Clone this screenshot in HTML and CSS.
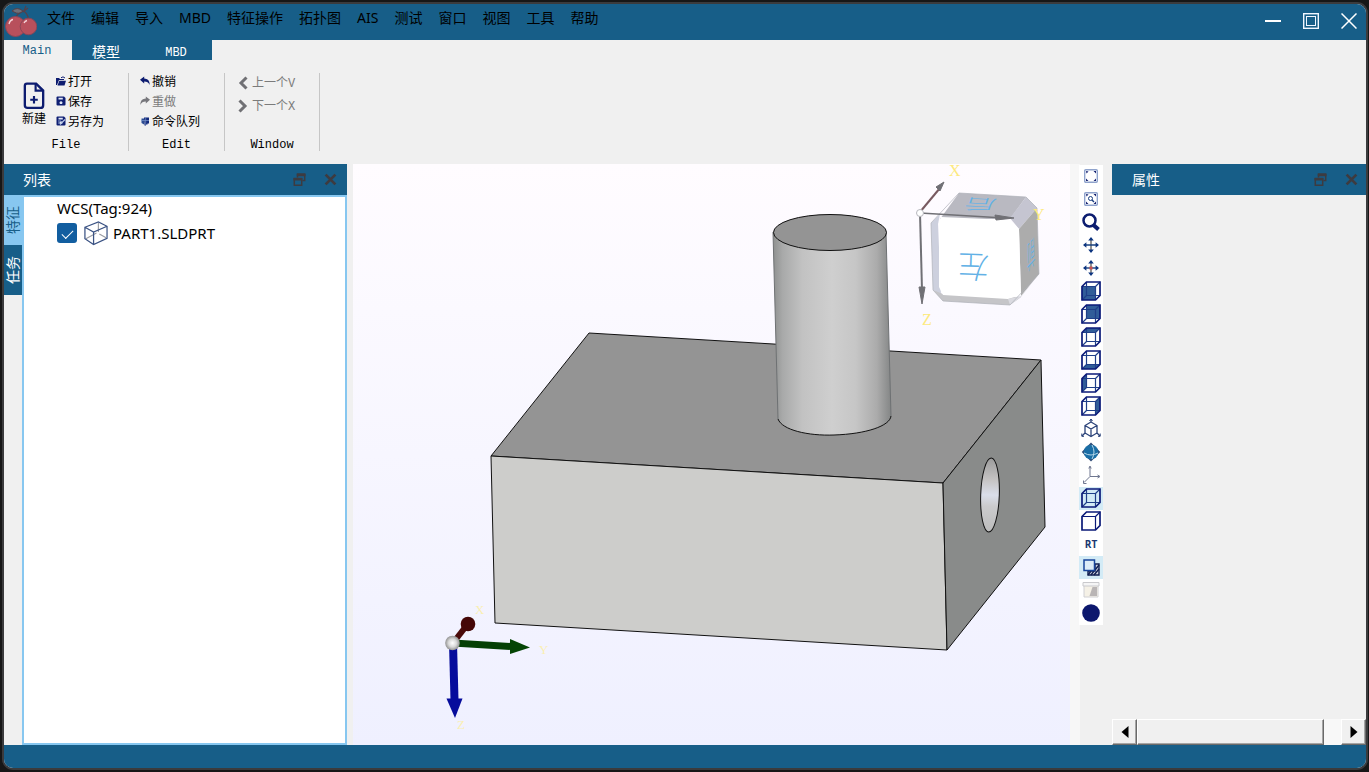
FILE: index.html
```html
<!DOCTYPE html>
<html lang="zh-CN">
<head>
<meta charset="utf-8">
<title>PART1.SLDPRT</title>
<link rel="stylesheet" href="styles.css">
</head>
<body>
<svg class="defs" aria-hidden="true">
  <defs>
    <symbol id="cube" viewBox="0 0 20 20">
      <path d="M1 5.500H14.500V19M5.500 1V14.500H19M14.500 5.500L19 1M1 19L5.500 14.500" fill="none" stroke="#1f3f88" stroke-width="1.200"/>
      <path d="M1 5.500L5.500 1H19V14.500L14.500 19H1Z" fill="none" stroke="#0b1a78" stroke-width="1.700"/>
    </symbol>
    <symbol id="move" viewBox="0 0 16 16">
      <path d="M8 2V14" stroke="#777" stroke-width="1.6"/>
      <path d="M2 8H14" stroke="#17407f" stroke-width="1.4"/>
      <path d="M8 0L10.8 3.4H5.2ZM8 16L5.2 12.6H10.8ZM0 8L3.4 5.2V10.8ZM16 8L12.6 10.8V5.2Z" fill="#0d3580"/>
    </symbol>
    <symbol id="frame" viewBox="0 0 14 14">
      <rect x=".7" y=".7" width="12.600" height="12.600" rx="1" fill="#fff" stroke="#8fa3cc" stroke-width="1.4"/>
      <path d="M2 2L4.5 2.5L2.5 4.5ZM12 2V4.5L9.5 2ZM2 12V9.5L4.5 12ZM12 12H9.5L12 9.5Z" fill="#142070"/>
    </symbol>
    <symbol id="restore" viewBox="0 0 12 13">
      <path d="M4 4.5V1H11.2V7.5H9" fill="none" stroke="#3d3b40" stroke-width="1.5"/>
      <path d="M3.300 1H12V3.200H3.300ZM0 5H8.800V7.400H0Z" fill="#3d3b40"/>
      <path d="M.8 5.500H8.200V12.200H.8Z" fill="none" stroke="#3d3b40" stroke-width="1.5"/>
    </symbol>
    <symbol id="cross" viewBox="0 0 12 12">
      <path d="M1.500 1.500L10.500 10.500M10.500 1.500L1.500 10.500" stroke="#3d3b40" stroke-width="2.600"/>
    </symbol>
    <symbol id="floppy" viewBox="0 0 10 10">
      <path d="M.5 1.500Q.5.5 1.500.5H8L9.500 2V8.500Q9.500 9.500 8.500 9.500H1.500Q.5 9.500.5 8.500Z" fill="#0f1f73"/>
      <path d="M2.500 1.800H6.800V3.600H2.500ZM5 5.300A1.500 1.400 0 1 0 5.010 5.300" fill="#dfe6f5"/>
    </symbol>
  </defs>
</svg>
<div class="window">
  <header class="titlebar">
    <svg class="logo" viewBox="0 0 32 33" aria-hidden="true">
      <path d="M21 1L19 6Q12 8 9 15M19 6Q24 10 24 19M18 7L23 3" fill="none" stroke="#554049" stroke-width="1.200"/>
      <path d="M7 6Q12 1 18 6Q14 10 9 7Z" fill="#6d7079" stroke="#554049"/>
      <circle cx="10.500" cy="21.500" r="10" fill="#b8505c" stroke="#8b4757"/>
      <circle cx="23.500" cy="21.500" r="8.300" fill="#b8505c" stroke="#8b4757"/>
      <path d="M4 19Q5 15 8 14.500M19 18Q20 16 22 15.500" fill="none" stroke="#f4d4d8" stroke-width="1.300"/>
    </svg>
    <nav class="menu">
      <button>文件</button><button>编辑</button><button>导入</button><button>MBD</button><button>特征操作</button><button>拓扑图</button><button>AIS</button><button>测试</button><button>窗口</button><button>视图</button><button>工具</button><button>帮助</button>
    </nav>
    <div class="controls">
      <button aria-label="最小化"><svg viewBox="0 0 16 16"><path d="M0 8H16" stroke="#fff" stroke-width="2"/></svg></button>
      <button aria-label="最大化"><svg viewBox="0 0 16 16" fill="none" stroke="#f0f6ff"><rect x=".7" y=".7" width="14.600" height="14.600" stroke-width="1.400"/><rect x="3.500" y="3.500" width="9" height="9"/></svg></button>
      <button aria-label="关闭"><svg viewBox="0 0 16 16"><path d="M.5.5L15.500 15.500M15.500.5L.5 15.500" stroke="#fff" stroke-width="1.500"/></svg></button>
    </div>
  </header>

  <div class="tabs" role="tablist">
    <button class="tab tab-active" role="tab" aria-selected="true">Main</button>
    <button class="tab tab-cn" role="tab">模型</button>
    <button class="tab" role="tab">MBD</button>
  </div>

  <section class="ribbon">
    <div class="group group-file">
      <div class="group-body">
        <button class="big">
          <svg viewBox="0 0 20 26"><path d="M3.500 1.500H12L18.500 8V21.500Q18.500 24 16 24H4Q1.500 24 1.500 21.500V3.500Q1.500 1.500 3.500 1.500Z" fill="none" stroke="#0d1c70" stroke-width="2.200"/><path d="M11.500 1.500V8H18.500M10 13V20M6.500 16.500H13.500" fill="none" stroke="#0d1c70" stroke-width="2"/></svg>
          新建
        </button>
        <div class="stack">
          <button><svg viewBox="0 0 10 10"><path d="M0 9V2H3L4 3H8V4H3L1 9ZM3.300 4.800H10L8.500 9.500H1.500Z" fill="#0d1c70"/><path d="M5 1.800Q7-.2 9 2" fill="none" stroke="#0d1c70"/></svg>打开</button>
          <button><svg><use href="#floppy"/></svg>保存</button>
          <button><svg viewBox="0 0 10 10"><use href="#floppy" width="10" height="10"/><path d="M4 8.500L9 3.500" stroke="#b8c6e4" stroke-width="1.200"/><path d="M2 5H5M2 7H4" stroke="#8fa5d2"/></svg>另存为</button>
        </div>
      </div>
      <div class="group-name">File</div>
    </div>
    <div class="group group-edit">
      <div class="stack">
        <button><svg viewBox="0 0 10 10"><path d="M0 3.800L4.200.5V2.600Q9.500 2.600 9.800 9Q8 5.500 4.200 5.600V7.500Z" fill="#0d1c70"/></svg>撤销</button>
        <button disabled><svg viewBox="0 0 10 10"><path d="M10 3.800L5.800.5V2.600Q.5 2.600.2 9Q2 5.500 5.800 5.600V7.500Z" fill="#77777c"/></svg>重做</button>
        <button><svg viewBox="0 0 10 10"><path d="M1.500 2.500H4V8.500L1.500 7Z" fill="#2c4c93"/><path d="M4 1.500H9V7.500H7.500V8.500H6V9.500H4.500Z" fill="#12297b"/><path d="M1 4.500H9M5.700 1V9" stroke="#7d97cc" stroke-width=".7"/></svg>命令队列</button>
      </div>
      <div class="group-name">Edit</div>
    </div>
    <div class="group group-window">
      <div class="stack stack-wide">
        <button disabled><svg viewBox="0 0 10 14"><path d="M8.500 1.500L3 7L8.500 12.500" fill="none" stroke="#707074" stroke-width="3"/></svg>上一个V</button>
        <button disabled><svg viewBox="0 0 10 14"><path d="M1.500 1.500L7 7L1.500 12.500" fill="none" stroke="#707074" stroke-width="3"/></svg>下一个X</button>
      </div>
      <div class="group-name">Window</div>
    </div>
  </section>

  <main class="workspace">
    <aside class="dock dock-left">
      <div class="dock-title"><h2>列表</h2><button aria-label="浮动"><svg><use href="#restore"/></svg></button><button aria-label="关闭"><svg><use href="#cross"/></svg></button></div>
      <div class="dock-body">
        <div class="side-tabs">
          <button class="side-active">特征</button>
          <button>任务</button>
        </div>
        <div class="tree">
          <div class="tree-root">WCS(Tag:924)</div>
          <div class="tree-item">
            <input type="checkbox" id="part" checked>
            <label for="part"><svg viewBox="0 0 26 26"><path d="M16 2V12M14 13L3 19M17 14L24 18" fill="none" stroke="#9a9ca3" stroke-width="1.200"/><path d="M2 7L16 1.500L25 6V18.500L11 25L2 19ZM2 7L11 12L25 6M11 12V25" fill="none" stroke="#3b5384" stroke-width="1.300"/></svg>PART1.SLDPRT</label>
          </div>
        </div>
      </div>
    </aside>

    <svg class="scene" viewBox="353 164 717 581" preserveAspectRatio="xMidYMid slice">
      <defs>
        <linearGradient id="cyl"><stop offset="0" stop-color="#8e908f"/><stop offset=".08" stop-color="#a8a9a9"/><stop offset=".25" stop-color="#c2c2c2"/><stop offset=".5" stop-color="#cfcfcf"/><stop offset=".7" stop-color="#c6c6c6"/><stop offset=".88" stop-color="#ababab"/><stop offset="1" stop-color="#848686"/></linearGradient>
        <linearGradient id="hole" x2="0" y2="1"><stop offset="0" stop-color="#9b9b9b"/><stop offset=".3" stop-color="#c6c4c4"/><stop offset=".5" stop-color="#dadeea"/><stop offset=".65" stop-color="#cbcbcd"/><stop offset="1" stop-color="#bcbcbc"/></linearGradient>
        <radialGradient id="ball"><stop offset="0" stop-color="#fff"/><stop offset=".55" stop-color="#d8d8d8"/><stop offset="1" stop-color="#929292"/></radialGradient>
      </defs>
      <g stroke="#111" stroke-width="1" stroke-linejoin="round">
        <path d="M589 333L1041 360L943 483L491 456Z" fill="#949494"/>
        <path d="M491 456L943 483L947 650L495 623Z" fill="#cdcdcb"/>
        <path d="M943 483L1041 360L1045 527L947 650Z" fill="#898b8a"/>
        <path d="M773 232L778 419C782 430 808 436 834 435C866 434 890 426 891 416L886 232Z" fill="url(#cyl)" stroke="none"/>
        <path d="M773 232L778 419M886 232L891 416" stroke="#6e7173"/>
        <path d="M778 419C782 430 808 436 834 435C866 434 890 426 891 416" fill="none"/>
        <ellipse cx="830" cy="232.500" rx="56.500" ry="18" fill="#949494"/>
        <ellipse cx="990" cy="495" rx="9.300" ry="37" fill="url(#hole)" transform="rotate(2 990 495)"/>
      </g>
      <g>
        <path d="M940 219L959 193L1026 197L1010 219Z" fill="#b9b9c1"/>
        <path d="M1026 197L1037 208L1019 229L1010 218Z" fill="#c5c5d1"/>
        <path d="M931 223L940 214L938 224L941 295L933 290Z" fill="#cdd0de"/>
        <path d="M933 290L943 294L1021 297L1010 305L943 301Z" fill="#c5c5c8"/>
        <path d="M1019 229L1037 208L1039 274L1021 296Z" fill="#acacac"/>
        <path d="M941 217L1010 220L1019 229L1021 295L1008 299L943 295L939 287L939 222Z" fill="#fff"/>
        <path d="M1021 296L1008 299L1010 305L1021 297L1039 274" fill="#dadae0"/>
        <path d="M959 193L1026 197L1037 208L1039 274L1010 305L943 301L933 290L931 223Z" fill="none" stroke="#aeb0b8" stroke-width=".7"/>
        <g class="face">
          <text x="-15" y="11" font-size="31" transform="translate(974 266) rotate(182)">左</text>
          <text x="-15" y="11" font-size="31" transform="matrix(-1 -.05 .16 -.46 981 204)">后</text>
          <text x="-15" y="11" font-size="31" transform="matrix(-.27 .3 -.03 -1 1031 254)">前</text>
        </g>
        <g stroke="#707075" fill="#707075">
          <path d="M920 212L940 188" stroke-width="2" stroke="#785a60"/><path d="M944 182L936 187L940 191Z"/>
          <path d="M920 213L1004 218" stroke-width="1.600"/><path d="M1014 218L995 215L996 220Z"/>
          <path d="M920 213L922 290" stroke-width="2"/><path d="M922 304L919 287H925Z"/>
          <circle cx="920" cy="213" r="3.500" fill="#fff" stroke="#b7b7bd"/>
        </g>
        <g class="axis"><text x="949" y="176">X</text><text x="1033" y="220">Y</text><text x="922" y="325">Z</text></g>
      </g>
      <g>
        <path d="M453 643L467 625" stroke="#4a0a0a" stroke-width="6"/><circle cx="468" cy="624" r="7.300" fill="#450707"/>
        <path d="M453 643L511 646.500" stroke="#054005" stroke-width="7"/><path d="M530 647.500L510 639L510 654Z" fill="#054505"/>
        <path d="M453 643L454.500 700" stroke="#060c9c" stroke-width="8"/><path d="M455 718L446.500 698.500H462.500Z" fill="#060c9c"/>
        <circle cx="452.500" cy="643" r="7.300" fill="url(#ball)"/>
        <g class="axis axis-small"><text x="475" y="614">X</text><text x="539" y="654">Y</text><text x="457" y="729">Z</text></g>
      </g>
    </svg>

    <div class="toolbar-column">
      <div class="toolbar">
        <button aria-label="适合窗口"><svg class="small"><use href="#frame"/></svg></button>
        <button aria-label="区域缩放"><svg class="small" viewBox="0 0 14 14"><use href="#frame" width="14" height="14"/><circle cx="6.500" cy="6.500" r="2" fill="none" stroke="#183d80"/><path d="M8 8L10 10" stroke="#183d80" stroke-width="1.500"/></svg></button>
        <button aria-label="缩放"><svg viewBox="0 0 20 20"><circle cx="8.500" cy="8.500" r="6" fill="none" stroke="#0c1d70" stroke-width="2.500"/><path d="M12.500 13L17.500 17.500" stroke="#0c1d70" stroke-width="4"/></svg></button>
        <button aria-label="平移"><svg class="medium"><use href="#move"/></svg></button>
        <button aria-label="中心"><svg class="medium" viewBox="0 0 16 16"><use href="#move" width="16" height="16"/><rect x="6.500" y="6.500" width="3" height="3" fill="#c95050"/></svg></button>
        <button aria-label="前视"><svg viewBox="0 0 20 20"><path d="M1 6H14V19H1Z" fill="#315d99"/><use href="#cube" width="20" height="20"/></svg></button>
        <button aria-label="后视"><svg viewBox="0 0 20 20"><path d="M6 1H19V14H6Z" fill="#315d99"/><use href="#cube" width="20" height="20"/></svg></button>
        <button aria-label="顶视"><svg viewBox="0 0 20 20"><path d="M1 6L6 1H19L14 6Z" fill="#315d99"/><use href="#cube" width="20" height="20"/></svg></button>
        <button aria-label="底视"><svg viewBox="0 0 20 20"><path d="M1 19L6 14H19L14 19Z" fill="#315d99"/><use href="#cube" width="20" height="20"/></svg></button>
        <button aria-label="左视"><svg viewBox="0 0 20 20"><path d="M1 6L6 1V14L1 19Z" fill="#315d99"/><use href="#cube" width="20" height="20"/></svg></button>
        <button aria-label="右视"><svg viewBox="0 0 20 20"><path d="M14 6L19 1V14L14 19Z" fill="#315d99"/><use href="#cube" width="20" height="20"/></svg></button>
        <button aria-label="轴测"><svg viewBox="0 0 20 20" fill="none" stroke="#2b4379" stroke-width="1.300"><path d="M10 3L16 6.500V14L10 17.500L4 14V6.500ZM4 6.500L10 10L16 6.500M10 10V17.500M10 0V3M4 14L1 17M16 14L19 17"/><path d="M8.500 2L10 0L11.500 2M.8 14.500V17.300H3M17 17.300H19.200V14.500" stroke-width="1"/></svg></button>
        <button aria-label="旋转"><svg viewBox="0 0 20 20"><path d="M10 .5L13.500 4H6.500ZM10 19.500L6.500 16H13.500ZM.8 10L4 6.500V13.500ZM19.200 10L16 13.500V6.500Z" fill="#334f79"/><circle cx="10" cy="10" r="7.300" fill="#1b6ea5"/><path d="M3 11Q10 15 17 11M11 3Q15 10 11 17" fill="none" stroke="#b9d9ea"/></svg></button>
        <button aria-label="坐标轴"><svg viewBox="0 0 20 20" fill="none" stroke="#6f7790"><path d="M9 2V11.500H18M9 11.500L3 17.500M7.800 3.500L9 1L10.200 3.500M16.500 10L19 11.500L16.500 13M2.500 15.500V18.500H5.500"/></svg></button>
        <button class="pressed" aria-label="线框"><svg viewBox="0 0 20 20"><use href="#cube" width="20" height="20"/></svg></button>
        <button aria-label="消隐"><svg viewBox="0 0 20 20" fill="none" stroke="#0b1a78"><path d="M1 5.500L5.500 1H19V14.500L14.500 19H1Z" stroke-width="1.700"/><path d="M1 5.500H14.500V19M14.500 5.500L19 1" stroke-width="1.200"/></svg></button>
        <button class="rt">RT</button>
        <button class="pressed" aria-label="阴影"><svg viewBox="0 0 20 20"><path d="M7 17V14H14V7H18V18H7Z" fill="#c9d0df" stroke="#101e50" stroke-width="1.400"/><path d="M7 18L10 14M10 18L13 14M13 18L18 12M14 13L18 8" stroke="#101e50" stroke-width="1.400"/><path d="M3 3H13.500V13.500H3Z" fill="#dcecf7" stroke="#17449a" stroke-width="1.500"/></svg></button>
        <button aria-label="背景"><svg viewBox="0 0 20 20"><path d="M3 5H17V17H3Z" fill="#f5f1e6" stroke="#d0d0d4"/><path d="M11.500 7H16V16H8.500Z" fill="#b9b5b5"/><path d="M2 2.500H18V6H2Z" fill="#f5f5f5" stroke="#c9c9cc"/></svg></button>
        <button aria-label="球体"><svg viewBox="0 0 20 20"><circle cx="10" cy="10" r="8.800" fill="#0c176d"/></svg></button>
      </div>
    </div>

    <aside class="dock dock-right">
      <div class="dock-title"><h2>属性</h2><button aria-label="浮动"><svg><use href="#restore"/></svg></button><button aria-label="关闭"><svg><use href="#cross"/></svg></button></div>
      <div class="properties"></div>
      <div class="scrollbar">
        <button aria-label="向左"><svg viewBox="0 0 8 14"><path d="M7.500 1V13L.5 7Z"/></svg></button>
        <div class="track"><div class="thumb"></div></div>
        <button aria-label="向右"><svg viewBox="0 0 8 14"><path d="M.5 1V13L7.500 7Z"/></svg></button>
      </div>
    </aside>
  </main>
  <footer class="status"></footer>
</div>
</body>
</html>
```
FILE: styles.css
```css
* {
  box-sizing: border-box;
}

:root {
  --blue: #175e88;
  --light-blue: #87c7f0;
  --panel: #f0f0f0;
  --mono: "Liberation Mono", "Noto Sans CJK SC", monospace;
  --sans: "Noto Sans", "Noto Sans CJK SC", sans-serif;
}

body {
  display: flex;
  height: 100vh;
  margin: 0;
  padding: 2px 1px 2px 2px;
  background: #171717;
  font: 12px/16px var(--mono);
  color: #000;
}

button {
  display: flex;
  align-items: center;
  justify-content: center;
  margin: 0;
  padding: 0;
  border: 0;
  background: none;
  color: inherit;
  font: inherit;
}

svg {
  display: block;
  flex: none;
}

.defs {
  position: absolute;
  width: 0;
  height: 0;
}

.window {
  display: flex;
  flex: 1;
  flex-direction: column;
  min-width: 0;
  overflow: hidden;
  border: 2px solid #3b3b3d;
  border-radius: 11px;
  background: var(--panel);
}

.titlebar {
  display: flex;
  height: 36px;
  flex: none;
  background: var(--blue);
}

.logo {
  width: 32px;
  height: 33px;
  margin: 1px 0 0 1px;
}

.menu {
  display: flex;
  align-items: flex-start;
  padding-left: 2px;
  font: 14px/20px var(--sans);
}

.menu button {
  padding: 4px 8px;
}

.controls {
  display: flex;
  align-items: center;
  gap: 22px;
  margin-left: auto;
  padding: 0 9px 2px 0;
}

.controls svg {
  width: 16px;
  height: 16px;
}

.tabs {
  display: flex;
  height: 20px;
  flex: none;
}

.tab {
  width: 72px;
  padding-top: 6px;
  background: var(--blue);
  color: #fff;
}

.tab-active {
  width: 68px;
  padding: 2px 2px 0 0;
  background: var(--panel);
  color: var(--blue);
}

.tab-cn {
  width: 68px;
  font-size: 14px;
}

.ribbon {
  display: flex;
  height: 104px;
  flex: none;
  padding: 13px 0;
}

.group {
  display: flex;
  flex-direction: column;
  justify-content: space-between;
  border-right: 1px solid #c6c6c6;
}

.group-file {
  width: 125px;
}

.group-edit {
  width: 96px;
}

.group-window {
  width: 95px;
}

.group-body {
  display: flex;
  gap: 9px;
  padding-left: 17px;
}

.big {
  flex-direction: column;
  gap: 2px;
  width: 26px;
  padding-top: 6px;
}

.big svg {
  width: 22px;
  height: 28px;
}

.stack {
  display: flex;
  flex-direction: column;
  align-items: flex-start;
  gap: 4px;
  padding-top: 2px;
}

.stack button {
  gap: 2px;
  white-space: nowrap;
}

.stack svg {
  width: 10px;
  height: 10px;
  margin-bottom: 4px;
}

.stack button:disabled {
  color: #7b7b7b;
}

.group-edit .stack {
  padding-left: 11px;
}

.stack-wide {
  gap: 7px;
  padding: 3px 0 0 13px;
}

.stack-wide button {
  height: 16px;
  gap: 4px;
}

.stack-wide svg {
  height: 14px;
  margin-bottom: 2px;
}

.group-name {
  line-height: 12px;
  text-align: center;
}

.workspace {
  display: flex;
  flex: 1;
  min-height: 0;
}

.dock {
  display: flex;
  flex: none;
  flex-direction: column;
}

.dock-left {
  width: 343px;
  margin-right: 6px;
}

.dock-right {
  width: 254px;
}

.dock-title {
  display: flex;
  height: 31px;
  flex: none;
  align-items: center;
  gap: 18px;
  padding: 0 10px 0 19px;
  background: var(--blue);
  color: #fff;
}

.dock-right .dock-title {
  padding: 0 8px 0 20px;
}

.dock-title h2 {
  margin: 0 auto 0 0;
  font: 14px/20px var(--sans);
}

.dock-title svg {
  width: 13px;
  height: 13px;
}

.dock-body {
  display: flex;
  flex: 1;
}

.side-tabs {
  width: 18px;
}

.side-tabs button {
  width: 18px;
  height: 50px;
  background: var(--blue);
  color: #fff;
  font: 14px/18px var(--sans);
  writing-mode: vertical-rl;
  text-orientation: sideways;
  transform: rotate(180deg);
}

.side-tabs .side-active {
  background: var(--light-blue);
  color: var(--blue);
}

.tree {
  flex: 1;
  padding: 1px 33px;
  border: 2px solid var(--light-blue);
  background: #fff;
  font: 15px/20px var(--sans);
}

.tree-item,
.tree-item label {
  display: flex;
  align-items: center;
}

.tree-item {
  gap: 6px;
  padding-top: 2px;
}

.tree-item label {
  gap: 5px;
}

.tree-item label svg {
  width: 25px;
  height: 26px;
}

.tree-item input {
  display: grid;
  width: 20px;
  height: 20px;
  margin: 0;
  place-items: center;
  appearance: none;
  border-radius: 3px;
  background: #125ea0;
}

.tree-item input:checked::after {
  width: 10px;
  height: 5px;
  border: solid #fff;
  border-width: 0 0 1px 1px;
  content: "";
  transform: rotate(-45deg);
}

.scene {
  flex: 1;
  width: 0;
  min-width: 0;
  height: 100%;
  background: linear-gradient(#fffcff, #eff0ff);
}

.face {
  fill: #62b1e6;
  font-family: "Noto Sans CJK SC", sans-serif;
  font-weight: 300;
}

.axis {
  fill: #fdea80;
  font: 16px "Liberation Serif", serif;
}

.axis-small {
  fill: #faefb4;
  font-size: 13px;
}

.toolbar-column {
  flex: none;
  width: 42px;
  padding: 1px 9px;
  background: linear-gradient(90deg, #f7f7f7 10px, var(--panel) 10px);
}

.toolbar {
  width: 24px;
  background: #fff;
}

.toolbar button {
  width: 24px;
  height: 23px;
  padding-bottom: 1px;
}

.toolbar svg {
  width: 20px;
  height: 20px;
}

.toolbar .small {
  width: 14px;
  height: 14px;
}

.toolbar .medium {
  width: 16px;
  height: 16px;
}

.toolbar .pressed {
  background: #d3ebf6;
}

.toolbar .rt {
  color: #1b3770;
  font: bold 10px/14px "Open Sans", sans-serif;
}

.properties {
  flex: 1;
}

.scrollbar {
  display: flex;
  height: 26px;
  flex: none;
}

.scrollbar button,
.thumb {
  border: 1px solid;
  border-color: #fff #6a6a6a #6a6a6a #fff;
  background: var(--panel);
  box-shadow: inset -1px -1px #a5a5a5;
}

.scrollbar button {
  width: 25px;
}

.scrollbar svg {
  width: 8px;
  height: 14px;
}

.track {
  flex: 1;
  padding-right: 17px;
  background: #f8f8f8;
}

.thumb {
  height: 26px;
}

.status {
  height: 23px;
  flex: none;
  background: var(--blue);
}
```
